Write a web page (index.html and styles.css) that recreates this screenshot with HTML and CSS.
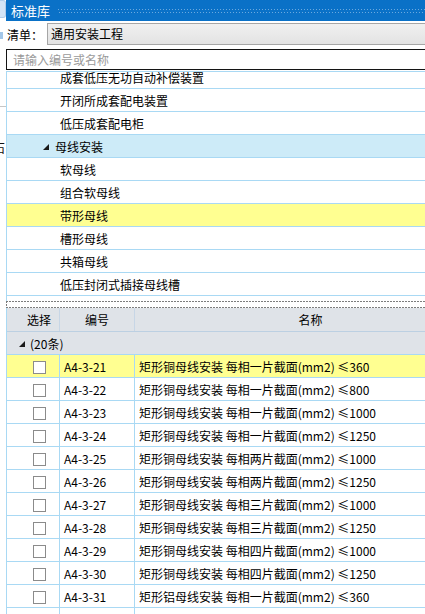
FILE: index.html
```html
<!DOCTYPE html>
<html lang="zh-CN">
<head>
<meta charset="utf-8">
<title>标准库</title>
<link rel="stylesheet" href="styles.css">
</head>
<body>
  <div class="backdrop">
    <div class="bd-top"></div>
    <div class="bd-blue"></div>
    <div class="bd-line"></div>
    <div class="bd-glyph">石</div>
  </div>
  <div class="window">
    <div class="titlebar">
      <span class="title">标准库</span>
      <span class="grip"></span>
    </div>
    <div class="toolbar">
      <span class="label">清单：</span>
      <div class="select">通用安装工程</div>
    </div>
    <div class="search">请输入编号或名称</div>
    <div class="gap"></div>
    <div class="tree">
      <div class="tree-inner">
        <div class="tree-row">成套低压无功自动补偿装置</div>
        <div class="tree-row">开闭所成套配电装置</div>
        <div class="tree-row">低压成套配电柜</div>
        <div class="tree-row group selected"><svg class="twisty" width="6" height="6" viewBox="0 0 6 6"><polygon points="6,0 6,6 0,6" fill="#1a1a1a"/></svg>母线安装</div>
        <div class="tree-row">软母线</div>
        <div class="tree-row">组合软母线</div>
        <div class="tree-row hl">带形母线</div>
        <div class="tree-row">槽形母线</div>
        <div class="tree-row">共箱母线</div>
        <div class="tree-row">低压封闭式插接母线槽</div>
      </div>
    </div>
    <div class="splitter"></div>
    <div class="grid">
      <div class="grid-head">
        <div class="hc c1">选择</div>
        <div class="hc c2">编号</div>
        <div class="hc c3">名称</div>
      </div>
      <div class="group-row"><svg class="twisty" width="6" height="6" viewBox="0 0 6 6"><polygon points="6,0 6,6 0,6" fill="#1a1a1a"/></svg>(20条)</div>
      <div class="row hl"><div class="cell c1"><span class="cb"></span></div><div class="cell c2">A4-3-21</div><div class="cell c3">矩形铜母线安装 每相一片截面(mm2) ≤360</div></div>
      <div class="row"><div class="cell c1"><span class="cb"></span></div><div class="cell c2">A4-3-22</div><div class="cell c3">矩形铜母线安装 每相一片截面(mm2) ≤800</div></div>
      <div class="row"><div class="cell c1"><span class="cb"></span></div><div class="cell c2">A4-3-23</div><div class="cell c3">矩形铜母线安装 每相一片截面(mm2) ≤1000</div></div>
      <div class="row"><div class="cell c1"><span class="cb"></span></div><div class="cell c2">A4-3-24</div><div class="cell c3">矩形铜母线安装 每相一片截面(mm2) ≤1250</div></div>
      <div class="row"><div class="cell c1"><span class="cb"></span></div><div class="cell c2">A4-3-25</div><div class="cell c3">矩形铜母线安装 每相两片截面(mm2) ≤1000</div></div>
      <div class="row"><div class="cell c1"><span class="cb"></span></div><div class="cell c2">A4-3-26</div><div class="cell c3">矩形铜母线安装 每相两片截面(mm2) ≤1250</div></div>
      <div class="row"><div class="cell c1"><span class="cb"></span></div><div class="cell c2">A4-3-27</div><div class="cell c3">矩形铜母线安装 每相三片截面(mm2) ≤1000</div></div>
      <div class="row"><div class="cell c1"><span class="cb"></span></div><div class="cell c2">A4-3-28</div><div class="cell c3">矩形铜母线安装 每相三片截面(mm2) ≤1250</div></div>
      <div class="row"><div class="cell c1"><span class="cb"></span></div><div class="cell c2">A4-3-29</div><div class="cell c3">矩形铜母线安装 每相四片截面(mm2) ≤1000</div></div>
      <div class="row"><div class="cell c1"><span class="cb"></span></div><div class="cell c2">A4-3-30</div><div class="cell c3">矩形铜母线安装 每相四片截面(mm2) ≤1250</div></div>
      <div class="row"><div class="cell c1"><span class="cb"></span></div><div class="cell c2">A4-3-31</div><div class="cell c3">矩形铝母线安装 每相一片截面(mm2) ≤360</div></div>
      <div class="row"><div class="cell c1"><span class="cb"></span></div><div class="cell c2">A4-3-32</div><div class="cell c3">矩形铝母线安装 每相一片截面(mm2) ≤800</div></div>
    </div>
  </div>
</body>
</html>
```
FILE: styles.css
```css
* { box-sizing: border-box; }
html, body { margin: 0; padding: 0; }
body {
  width: 425px;
  height: 614px;
  overflow: hidden;
  display: flex;
  background: #fff;
  color: #000;
  font-family: "Noto Sans CJK SC", "Microsoft YaHei", sans-serif;
  font-size: 12px;
}

/* background window fragment on the left */
.backdrop {
  width: 6px;
  flex: none;
  display: flex;
  flex-direction: column;
  overflow: hidden;
}
.bd-top {
  height: 18px;
  background: #d4e4f6;
  border: 1px solid #b3cdea;
  border-left: none;
  border-radius: 0 3px 3px 0;
}
.bd-blue {
  width: 3px;
  height: 7px;
  margin-top: 14px;
  background: #a3c6e8;
}
.bd-line {
  height: 1px;
  margin-top: 67px;
  background: #c6c6c6;
}
.bd-glyph {
  margin-top: 34px;
  margin-left: -7px;
  line-height: 14px;
  font-size: 12px;
  color: #111;
}

.window {
  flex: none;
  width: 419px;
  overflow: hidden;
  display: flex;
  flex-direction: column;
}

.titlebar {
  height: 21px;
  flex: none;
  display: flex;
  align-items: center;
  background: #0a71c7;
  color: #fff;
}
.title {
  padding-left: 5px;
  font-size: 13px;
  line-height: 21px;
}
.grip {
  flex: 1;
  height: 4px;
  margin-left: 8px;
  background:
    linear-gradient(90deg, #6aa9df 1px, transparent 1px) 0 0 / 3px 1px repeat-x,
    linear-gradient(90deg, #6aa9df 1px, transparent 1px) 1px 3px / 3px 1px repeat-x;
}

.toolbar {
  height: 28px;
  flex: none;
  display: flex;
  align-items: flex-start;
}
.label {
  padding-left: 1px;
  width: 41px;
  line-height: 28px;
  flex: none;
}
.select {
  flex: 1;
  margin-top: 2px;
  margin-right: -4px;
  height: 22px;
  line-height: 20px;
  padding-left: 3px;
  border: 1px solid #a6a6a6;
  background: linear-gradient(#f0f0f0, #e3e3e3);
}

.search {
  height: 21px;
  flex: none;
  margin-right: -4px;
  border: 1px solid #141414;
  padding-left: 6px;
  line-height: 19px;
  color: #9a9a9a;
}
.gap { height: 1px; flex: none; }

.tree {
  height: 230px;
  flex: none;
  overflow: hidden;
  border-top: 1px solid #a9d9f4;
  border-left: 1px solid #a9d9f4;
}
.tree-inner { margin-top: -6px; }
.tree-row {
  height: 23px;
  border-bottom: 1px solid #a9d9f4;
  padding-left: 53px;
  display: flex;
  align-items: center;
  white-space: nowrap;
}
.tree-row.group { padding-left: 36px; }
.tree-row.selected { background: #cdebf8; }
.tree-row.hl { background: #ffff91; }
.twisty { flex: none; margin-right: 6px; margin-top: 1px; }

.splitter {
  height: 7px;
  flex: none;
  background:
    repeating-linear-gradient(90deg, #7d7d7d 0 2px, transparent 2px 3px) left top / 100% 1px no-repeat,
    repeating-linear-gradient(90deg, #7d7d7d 0 2px, transparent 2px 3px) left bottom / 100% 1px no-repeat,
    repeating-linear-gradient(180deg, #7d7d7d 0 2px, transparent 2px 3px) left top / 1px 100% no-repeat;
}

.grid {
  flex: 1;
  border-left: 1px solid #a9d9f4;
  overflow: hidden;
}
.grid-head {
  height: 24px;
  display: flex;
  background: #dfe3e8;
  border-bottom: 1px solid #bcd0e2;
}
.hc {
  flex: none;
  display: flex;
  align-items: center;
  justify-content: center;
  border-right: 1px solid #c7d6e6;
}
.c1 { width: 53px; }
.c2 { width: 75px; }
.c3 { width: 352px; }
.hc.c1 { padding-left: 12px; }

.group-row {
  height: 23px;
  display: flex;
  align-items: center;
  padding-left: 12px;
  background: #dfe3e8;
  border-bottom: 1px solid #a9d9f4;
}
.group-row .twisty { margin-right: 5px; }

.row {
  height: 23px;
  display: flex;
  border-bottom: 1px solid #a9d9f4;
}
.row.hl { background: #ffff91; }
.cell {
  flex: none;
  display: flex;
  align-items: center;
  white-space: nowrap;
  border-right: 1px solid #a9d9f4;
}
.cell.c1 { justify-content: center; padding-left: 12px; }
.cell.c2 { padding-left: 4px; }
.cell.c3 { padding-left: 4px; }
.cb {
  width: 13px;
  height: 13px;
  margin-top: 2px;
  border: 1px solid #8b8b8b;
  background: #fff;
}
```
